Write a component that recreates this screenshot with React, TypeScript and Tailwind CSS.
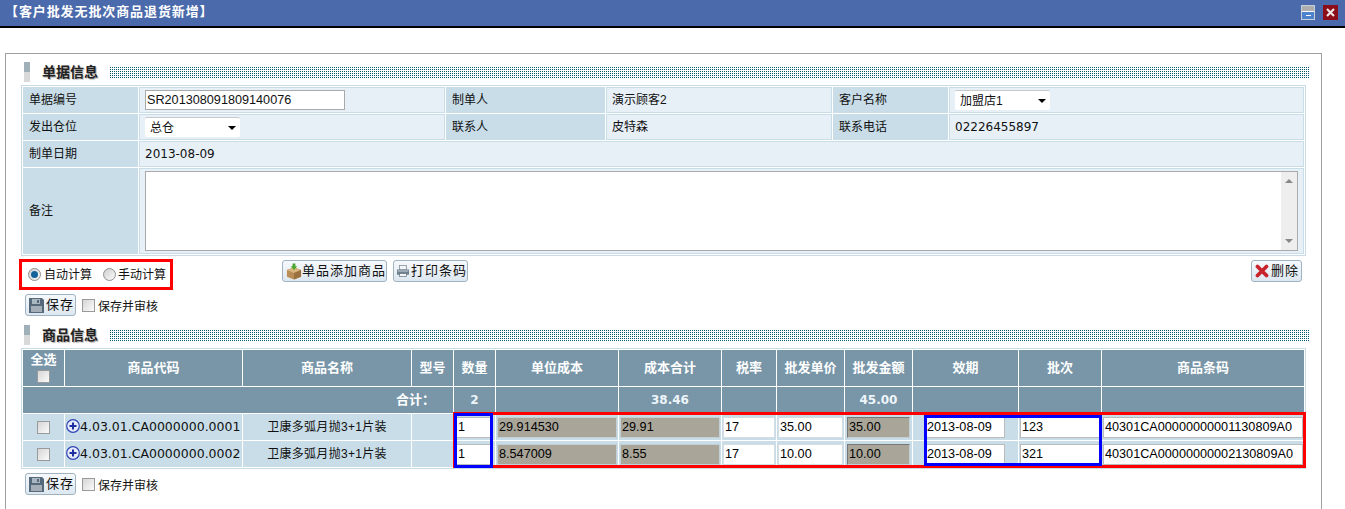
import React from 'react';

const rows = [
  { code: '4.03.01.CA0000000.0001', qty: '1', cost: '29.914530', total: '29.91', price: '35.00', amount: '35.00', batch: '123', barcode: '40301CA00000000001130809A0' },
  { code: '4.03.01.CA0000000.0002', qty: '1', cost: '8.547009', total: '8.55', price: '10.00', amount: '10.00', batch: '321', barcode: '40301CA00000000002130809A0' },
];

const headers = ['商品代码', '商品名称', '型号', '数量', '单位成本', '成本合计', '税率', '批发单价', '批发金额', '效期', '批次', '商品条码'];

function SaveIcon() {
  return (
    <svg width="15" height="15" viewBox="0 0 15 15">
      <path d="M0 0h13l2 2v13H0z" fill="#56697a" />
      <rect x="3" y="1" width="8" height="5" fill="#aab6c0" />
      <rect x="8" y="2" width="2" height="3" fill="#56697a" />
      <rect x="2" y="8" width="11" height="6" fill="#a5aeb6" />
    </svg>
  );
}

function BoxIcon() {
  return (
    <svg width="17" height="17" viewBox="0 0 17 17">
      <path d="M1 7l7.500-3 7.500 3v7l-7.500 3-7.500-3z" fill="#b98d55" />
      <path d="M1 7l7.500 3 7.500-3-7.500-3z" fill="#d9b680" />
      <path d="M8.500 10v7l7.500-3V7z" fill="#9a7240" />
      <path d="M7 0h3v3h2l-3.500 4L5 3h2z" fill="#4aa52e" />
    </svg>
  );
}

function PrinterIcon() {
  return (
    <svg width="16" height="16" viewBox="0 0 16 16">
      <rect x="3.500" y="0.500" width="9" height="6" fill="#f1f3f5" stroke="#7f8d99" />
      <path d="M0 6h16v7H0z" fill="#6f7f8d" />
      <rect x="1" y="7" width="14" height="2" fill="#aab6c0" />
      <rect x="3.500" y="11.500" width="9" height="4" fill="#f2f4f6" stroke="#6b7985" />
    </svg>
  );
}

function DeleteIcon() {
  return (
    <svg width="14" height="14" viewBox="0 0 14 14">
      <path d="M2.500 2.500l9 9M11.500 2.500l-9 9" stroke="#c8232c" strokeWidth="3.800" strokeLinecap="round" />
    </svg>
  );
}

function PlusIcon() {
  return (
    <svg width="14" height="14" viewBox="0 0 14 14" className="shrink-0">
      <circle cx="7" cy="7" r="6.300" fill="#e8ecfa" stroke="#2f45b5" strokeWidth="1.200" />
      <path d="M7 3.500v7M3.500 7h7" stroke="#1f2fa0" strokeWidth="2" />
    </svg>
  );
}

function Checkbox() {
  return <span className="block w-[13px] h-[13px] border border-[#9a9a9a] bg-gradient-to-br from-[#d6d6d6] to-[#fbfbfb]" />;
}

function Radio({ checked }: { checked?: boolean }) {
  return (
    <span className="flex items-center justify-center w-[13px] h-[13px] rounded-full border border-[#8e8e8e] bg-gradient-to-br from-[#d0d0d0] to-[#fafafa]">
      {checked && <span className="block w-[7px] h-[7px] rounded-full bg-[#12639b]" />}
    </span>
  );
}

function Button({ icon, children, className }: { icon: React.ReactNode; children: React.ReactNode; className: string }) {
  return (
    <div className={`flex items-center h-[22px] pl-[3px] border border-[#9fb3c3] rounded-[3px] bg-gradient-to-b from-[#f6f9fc] to-[#dde7f0] text-[13px] tracking-[1px] whitespace-nowrap ${className}`}>
      {icon}
      <span>{children}</span>
    </div>
  );
}

function SectionHeader({ title }: { title: string }) {
  return (
    <div className="flex items-center h-[20px] ml-[18px] w-[1285px]">
      <div className="w-[6px] h-[20px] shrink-0 bg-gradient-to-b from-[#9fb0b8] from-50% to-[#d9d9d9] to-50%" />
      <div className="w-[80px] shrink-0 pl-[12px] text-[14px] font-bold text-[#222] leading-none [text-shadow:1px_1px_1px_#aaa]">{title}</div>
      <div className="flex-1 -ml-[1px] h-[11px] bg-[conic-gradient(#00596a_25%,#fff_0)] bg-[length:2px_2px]" />
    </div>
  );
}

function SaveRow() {
  return (
    <div className="flex items-center h-[22px] ml-[19px]">
      <Button icon={<SaveIcon />} className="w-[51px]">
        <span className="ml-[2px]">保存</span>
      </Button>
      <span className="ml-[6px]">
        <Checkbox />
      </span>
      <span className="ml-[3px] mt-[3px] text-[12px]">保存并审核</span>
    </div>
  );
}

function Select({ label }: { label: string }) {
  return (
    <div className="flex items-center justify-between w-[95px] h-[20px] pl-[5px] pr-[4px] bg-white rounded-[2px] border-t border-[#c9c9c9] text-[12px]">
      <span>{label}</span>
      <span className="w-0 h-0 border-x-[4px] border-x-transparent border-t-[4px] border-t-black" />
    </div>
  );
}

const labelCell = 'bg-[#c8dde8] border border-[#c8dde8] pl-[5px] text-[12px] font-normal text-left align-middle';
const valueCell = 'bg-[#e7f0f7] border border-[#c8dde8] pl-[5px] text-[12px] align-middle';
const thCell = 'bg-[#7896a8] text-white text-[13px] font-bold text-center align-middle p-0';
const numCell = "bg-[#7896a8] text-[#eef5fa] text-[12px] font-bold text-center align-middle p-0 font-['DejaVu_Sans']";
const rowCell = 'bg-[#c8dde8] p-0 align-middle';
const inputBase = 'block h-[21px] text-[12.67px] text-black outline-none pl-[1px]';

export default function App() {
  return (
    <div className="h-[509px] w-[1345px] overflow-hidden bg-white text-[#111] font-['Liberation_Sans','Noto_Sans_CJK_SC',sans-serif]">
      <div className="flex items-center justify-between h-[28px] pl-[5px] pr-[7px] pb-[3px] bg-[#4a6aab] border-b-2 border-black">
        <span className="text-white text-[13px] font-bold tracking-[0.9px]">【客户批发无批次商品退货新增】</span>
        <div className="flex items-center gap-[8px] mt-[2px]">
          <svg width="14" height="15" viewBox="0 0 14 15">
            <rect x="0.500" y="0.500" width="13" height="14" fill="#4f82cc" stroke="#c8d0d8" />
            <rect x="1" y="1" width="12" height="5" fill="#aeaeae" />
            <rect x="1" y="6" width="12" height="1" fill="#fff" />
            <rect x="5" y="10" width="5" height="1" fill="#fff" />
          </svg>
          <svg width="15" height="15" viewBox="0 0 15 15">
            <rect width="15" height="15" fill="#8c0d17" />
            <path d="M4 4l7 7M11 4l-7 7" stroke="#f1e6e6" strokeWidth="2.200" />
          </svg>
        </div>
      </div>

      <div className="mt-[25px] ml-[5px] w-[1317px] h-[460px] border-x border-t border-[#a0a0a0] pt-[8px]">
        <SectionHeader title="单据信息" />

        <table className="mt-[3px] ml-[15px] w-[1285px] table-fixed border-separate border-spacing-[1px] border border-[#c8dce6]">
          <colgroup>
            <col className="w-[115px]" />
            <col className="w-[306px]" />
            <col className="w-[159px]" />
            <col className="w-[226px]" />
            <col className="w-[115px]" />
            <col className="w-[355px]" />
          </colgroup>
          <tbody>
            <tr className="h-[26px]">
              <td className={labelCell}>单据编号</td>
              <td className={valueCell}>
                <input readOnly defaultValue="SR201308091809140076" className="block w-[200px] h-[20px] bg-white border border-[#aaa] pl-[1px] text-[12.67px] outline-none" />
              </td>
              <td className={labelCell}>制单人</td>
              <td className={valueCell}>演示顾客2</td>
              <td className={labelCell}>客户名称</td>
              <td className={valueCell}>
                <Select label="加盟店1" />
              </td>
            </tr>
            <tr className="h-[26px]">
              <td className={labelCell}>发出仓位</td>
              <td className={valueCell}>
                <Select label="总仓" />
              </td>
              <td className={labelCell}>联系人</td>
              <td className={valueCell}>皮特森</td>
              <td className={labelCell}>联系电话</td>
              <td className={`${valueCell} font-['DejaVu_Sans'] text-[12.7px]`}>02226455897</td>
            </tr>
            <tr className="h-[26px]">
              <td className={labelCell}>制单日期</td>
              <td colSpan={5} className={`${valueCell} font-['DejaVu_Sans'] text-[12.7px]`}>2013-08-09</td>
            </tr>
            <tr className="h-[86px]">
              <td className={labelCell}>备注</td>
              <td colSpan={5} className={valueCell}>
                <div className="flex justify-end w-[1153px] h-[80px] bg-white border border-[#aaa]">
                  <div className="flex flex-col items-center justify-between w-[16px] py-[7px] bg-[#eeeeee]">
                    <span className="w-0 h-0 border-x-[4px] border-x-transparent border-b-[4px] border-b-[#888]" />
                    <span className="w-0 h-0 border-x-[4px] border-x-transparent border-t-[4px] border-t-[#888]" />
                  </div>
                </div>
              </td>
            </tr>
          </tbody>
        </table>

        <div className="flex items-start mt-[3px] ml-[13px] w-[1283px]">
          <div className="flex items-center w-[154px] h-[31px] pl-[6px] border-[3px] border-[#f00] text-[12px]">
            <Radio checked />
            <span className="ml-[3px] mt-[1px]">自动计算</span>
            <span className="ml-[11px]">
              <Radio />
            </span>
            <span className="ml-[2px] mt-[1px]">手动计算</span>
          </div>
          <Button icon={<BoxIcon />} className="w-[105px] ml-[109px] mt-[1px] tracking-[0.8px]">单品添加商品</Button>
          <Button icon={<PrinterIcon />} className="w-[75px] ml-[6px] mt-[1px]">
            <span className="ml-[2px]">打印条码</span>
          </Button>
          <Button icon={<DeleteIcon />} className="w-[51px] ml-auto mt-[1px]">
            <span className="ml-[2px]">删除</span>
          </Button>
        </div>

        <div className="mt-[4px]">
          <SaveRow />
        </div>

        <div className="mt-[9px]">
          <SectionHeader title="商品信息" />
        </div>

        <div className="relative mt-[3px] ml-[15px] w-[1285px]">
          <table className="w-[1285px] table-fixed border-separate border-spacing-[1px] border border-[#c8dce6]">
            <colgroup>
              <col className="w-[41px]" />
              <col className="w-[177px]" />
              <col className="w-[168px]" />
              <col className="w-[41px]" />
              <col className="w-[41px]" />
              <col className="w-[122px]" />
              <col className="w-[102px]" />
              <col className="w-[54px]" />
              <col className="w-[67px]" />
              <col className="w-[67px]" />
              <col className="w-[105px]" />
              <col className="w-[82px]" />
              <col className="w-[202px]" />
            </colgroup>
            <thead>
              <tr className="h-[36px]">
                <th className={thCell}>
                  <div className="flex flex-col items-center gap-[3px] leading-[14px]">
                    全选
                    <Checkbox />
                  </div>
                </th>
                {headers.map((h) => (
                  <th key={h} className={thCell}>{h}</th>
                ))}
              </tr>
              <tr className="h-[26px]">
                <th colSpan={4} className={`${thCell} text-right pr-[18px]`}>合计：</th>
                <th className={numCell}>2</th>
                <th className={numCell} />
                <th className={numCell}>38.46</th>
                <th className={numCell} />
                <th className={numCell} />
                <th className={numCell}>45.00</th>
                <th className={numCell} />
                <th className={numCell} />
                <th className={numCell} />
              </tr>
            </thead>
            <tbody>
              {rows.map((r) => (
                <tr key={r.code} className="h-[26px]">
                  <td className={rowCell}>
                    <div className="flex justify-center">
                      <Checkbox />
                    </div>
                  </td>
                  <td className={rowCell}>
                    <div className="flex items-center pl-[1px] whitespace-nowrap text-[12.5px] font-['DejaVu_Sans']">
                      <span className="mb-[3px]">
                        <PlusIcon />
                      </span>
                      {r.code}
                    </div>
                  </td>
                  <td className={`${rowCell} text-center text-[12px] tracking-[0.3px]`}>卫康多弧月抛3+1片装</td>
                  <td className={rowCell} />
                  <td className={rowCell}>
                    <input readOnly value={r.qty} className={`${inputBase} w-[36px] ml-[2px] bg-white border border-[#bbb]`} />
                  </td>
                  <td className={rowCell}>
                    <input readOnly value={r.cost} className={`${inputBase} w-[120px] ml-[1px] bg-[#a9a598] border border-[#c2cfd5]`} />
                  </td>
                  <td className={rowCell}>
                    <input readOnly value={r.total} className={`${inputBase} w-[100px] ml-[1px] bg-[#a9a598] border border-[#c2cfd5]`} />
                  </td>
                  <td className={rowCell}>
                    <input readOnly value="17" className={`${inputBase} w-[52px] ml-[1px] bg-white border border-[#d5dde2]`} />
                  </td>
                  <td className={rowCell}>
                    <input readOnly value={r.price} className={`${inputBase} w-[65px] ml-[1px] bg-white border border-[#d5dde2]`} />
                  </td>
                  <td className={rowCell}>
                    <input readOnly value={r.amount} className={`${inputBase} w-[63px] ml-[2px] bg-[#a9a598] border border-[#777] border-r-[#c2cfd5] border-b-[#c2cfd5]`} />
                  </td>
                  <td className={rowCell}>
                    <input readOnly value="2013-08-09" className={`${inputBase} w-[80px] ml-[12px] bg-white border border-[#bbb]`} />
                  </td>
                  <td className={rowCell}>
                    <input readOnly value={r.batch} className={`${inputBase} w-[80px] ml-[1px] bg-white border border-[#bbb]`} />
                  </td>
                  <td className={rowCell}>
                    <input readOnly value={r.barcode} className={`${inputBase} w-[200px] ml-[1px] bg-white border border-[#bbb]`} />
                  </td>
                </tr>
              ))}
            </tbody>
          </table>
          <div className="absolute left-[432px] top-[64px] w-[853px] h-[56px] border-[3px] border-[#f00] pointer-events-none" />
          <div className="absolute left-[433px] top-[65px] w-[39px] h-[55px] border-[3px] border-[#00f] pointer-events-none" />
          <div className="absolute left-[903px] top-[67px] w-[178px] h-[51px] border-[3px] border-[#00f] pointer-events-none" />
        </div>

        <div className="mt-[4px]">
          <SaveRow />
        </div>
      </div>
    </div>
  );
}
